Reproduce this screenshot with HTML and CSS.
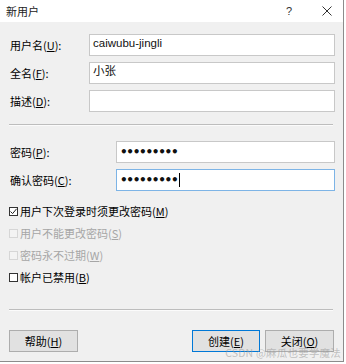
FILE: index.html
```html
<!DOCTYPE html>
<html lang="zh-CN">
<head>
<meta charset="utf-8">
<title>新用户</title>
<link rel="stylesheet" href="styles.css">
</head>
<body>
<div class="window">
  <div class="titlebar">
    <span class="title">新用户</span>
    <span class="tb-btn help">?</span>
    <span class="tb-btn close">
      <svg width="10" height="10" viewBox="0 0 10 10"><path d="M0.5 0.5 L9.5 9.5 M9.5 0.5 L0.5 9.5" stroke="#333" stroke-width="1" fill="none"/></svg>
    </span>
  </div>
  <div class="content">
    <div class="form form-a">
      <label class="lbl">用户名(<u>U</u>):</label>
      <div class="field">caiwubu-jingli</div>
      <label class="lbl">全名(<u>F</u>):</label>
      <div class="field">小张</div>
      <label class="lbl">描述(<u>D</u>):</label>
      <div class="field"></div>
    </div>
    <div class="sep"></div>
    <div class="form form-b">
      <label class="lbl">密码(<u>P</u>):</label>
      <div class="field pw">•••••••••</div>
      <label class="lbl">确认密码(<u>C</u>):</label>
      <div class="field pw focus">•••••••••<span class="caret"></span></div>
    </div>
    <div class="checks">
      <div class="chk"><span class="box checked"><svg width="9" height="9" viewBox="0 0 9 9"><path d="M1.5 4.5 L3.6 6.6 L7.6 1.8" stroke="#222" stroke-width="1" fill="none"/></svg></span>用户下次登录时须更改密码(<u>M</u>)</div>
      <div class="chk disabled"><span class="box"></span>用户不能更改密码(<u>S</u>)</div>
      <div class="chk disabled"><span class="box"></span>密码永不过期(<u>W</u>)</div>
      <div class="chk"><span class="box"></span>帐户已禁用(<u>B</u>)</div>
    </div>
    <div class="sep sep-bottom"></div>
    <div class="buttons">
      <button class="btn">帮助(<u>H</u>)</button>
      <span class="spacer"></span>
      <button class="btn default">创建(<u>E</u>)</button>
      <button class="btn">关闭(<u>O</u>)</button>
    </div>
  </div>
  <div class="watermark">CSDN @麻瓜也要学魔法</div>
</div>
</body>
</html>
```

FILE: styles.css
```css
html, body {
  margin: 0;
  padding: 0;
  background: #ffffff;
}
body {
  font-family: "Noto Sans CJK SC", "Noto Sans", sans-serif;
  font-size: 11px;
  color: #000;
}
.window {
  position: relative;
  width: 343px;
  height: 361px;
  background: #f0f0f0;
  border-right: 1px solid #8c8c8c;
  border-bottom: 1px solid #8c8c8c;
  overflow: hidden;
}
.titlebar {
  height: 22px;
  background: #ffffff;
  display: flex;
  align-items: center;
  padding-left: 6px;
}
.title {
  font-size: 11px;
  color: #222;
  flex: 1;
  line-height: 22px;
}
.tb-btn {
  display: flex;
  align-items: center;
  justify-content: center;
  height: 22px;
}
.help {
  font-family: "Liberation Sans", sans-serif;
  font-size: 11px;
  color: #333;
  width: 10px;
  margin-right: 28px;
}
.close {
  width: 10px;
  margin-right: 11px;
}
.content {
  padding: 12px 8px 0 9px;
}
.form {
  display: grid;
  row-gap: 6px;
  align-items: center;
}
.form-a {
  grid-template-columns: 80px 246px;
}
.form-b {
  grid-template-columns: 107px 219px;
  margin-top: 15px;
}
.lbl {
  padding-left: 1px;
  font-size: 11px;
  line-height: 14px;
}
u {
  text-decoration: underline;
  text-underline-offset: 1px;
}
.field {
  box-sizing: border-box;
  height: 22px;
  background: #fff;
  border: 1px solid #c8c8c8;
  padding: 0 3px;
  font-family: "Liberation Sans", "Noto Sans CJK SC", sans-serif;
  font-size: 11.5px;
  line-height: 17px;
  color: #111;
}
.field.pw {
  font-family: "DejaVu Sans", sans-serif;
  font-size: 12px;
  font-weight: bold;
  letter-spacing: -1.3px;
  line-height: 18px;
  padding-left: 3px;
  display: flex;
  align-items: center;
}
.field.focus {
  border-color: #7db4e6;
}
.caret {
  display: inline-block;
  width: 1px;
  height: 14px;
  background: #000;
  margin-left: 2px;
}
.sep {
  height: 1px;
  background: #bdbdbd;
  border-bottom: 1px solid #fbfbfb;
  margin-top: 12px;
  margin-right: 2px;
}
.checks {
  margin-top: 12px;
  display: flex;
  flex-direction: column;
  gap: 6px;
}
.chk {
  display: flex;
  align-items: center;
  height: 16px;
  font-size: 11px;
  color: #000;
}
.chk.disabled {
  color: #a6a6a6;
}
.box {
  box-sizing: border-box;
  width: 9px;
  height: 9px;
  border: 1px solid #333;
  background: #fff;
  margin-right: 2px;
  display: flex;
  align-items: center;
  justify-content: center;
}
.box svg {
  flex: none;
}
.chk.disabled .box {
  border-color: #d6d6d6;
  background: #f3f3f3;
}
.sep-bottom {
  margin-top: 24px;
}
.buttons {
  display: flex;
  margin-top: 19px;
  align-items: center;
}
.spacer {
  flex: 1;
}
.btn {
  box-sizing: border-box;
  width: 69px;
  height: 22px;
  background: #e1e1e1;
  border: 1px solid #adadad;
  font-family: "Noto Sans CJK SC", sans-serif;
  font-size: 11px;
  color: #000;
  padding: 0;
  margin: 0;
}
.btn.default {
  width: 68px;
  border-color: #0078d7;
  margin-right: 5px;
}
.buttons .btn:last-child {
  margin-right: 1px;
}
.watermark {
  position: absolute;
  right: 2px;
  bottom: 2px;
  font-size: 10.5px;
  line-height: 13px;
  color: rgba(150, 150, 150, 0.55);
  letter-spacing: 0.2px;
}
```
